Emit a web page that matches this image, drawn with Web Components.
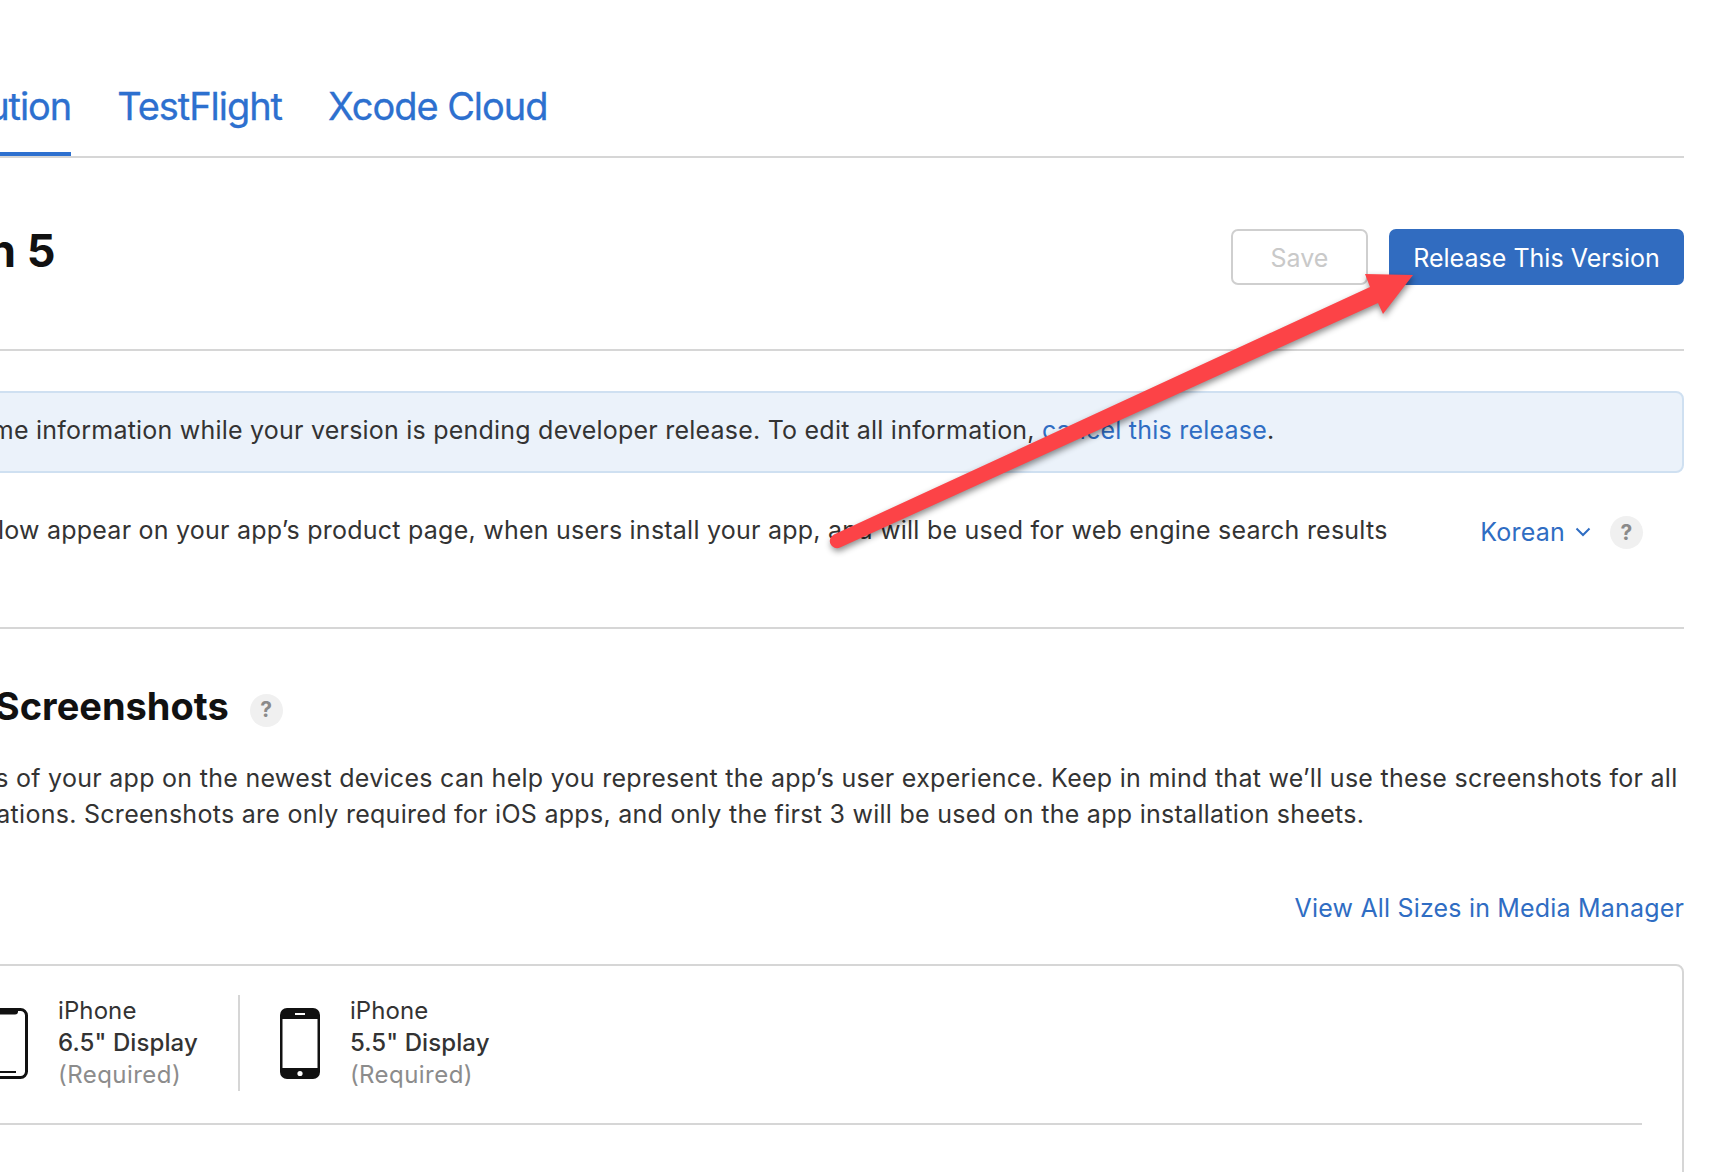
<!DOCTYPE html>
<html lang="en">
<head>
<meta charset="utf-8">
<title>App Store Connect</title>
<style>
  html, body { margin: 0; height: 100%; overflow: hidden; background: #fff; }
  body { font-family: Inter, "Liberation Sans", sans-serif; color: #333; }
</style>
</head>
<body>
<app-page>
  <app-tabs></app-tabs>
  <version-header></version-header>
  <info-banner></info-banner>
  <locale-row></locale-row>
  <media-section></media-section>
</app-page>
<release-arrow></release-arrow>

<script>
const BLUE = '#2f6dc3';

// Contenedor de la pagina: el contenido llega hasta x=1684 y se corta por la izquierda
class AppPage extends HTMLElement {
  constructor() {
    super();
    this.attachShadow({ mode: 'open' });
    this.shadowRoot.innerHTML = `
      <style>
        :host { display: block; width: 1684px; height: 1172px; overflow: hidden; }
      </style>
      <slot></slot>
    `;
  }
}

class AppTabs extends HTMLElement {
  constructor() {
    super();
    this.attachShadow({ mode: 'open' });
    this.shadowRoot.innerHTML = `
      <style>
        :host { display: flex; gap: 46px; height: 158px; box-sizing: border-box; border-bottom: 2px solid #d6d6d6; padding-top: 83px; }
        a { color: #2d70cf; font-size: 38px; line-height: 46px; letter-spacing: -1.05px; -webkit-text-stroke: .3px #2d70cf; white-space: nowrap; height: 73px; box-sizing: border-box; }
        a.on { margin-left: -122px; border-bottom: 4px solid #2d70cf; }
      </style>
      <a class="on">Distribution</a>
      <a>TestFlight</a>
      <a>Xcode Cloud</a>
    `;
  }
}

class VersionHeader extends HTMLElement {
  constructor() {
    super();
    this.attachShadow({ mode: 'open' });
    this.shadowRoot.innerHTML = `
      <style>
        :host { display: flex; justify-content: space-between; height: 193px; box-sizing: border-box; padding-top: 71px; border-bottom: 2px solid #d6d6d6; }
        h1 { margin: -6px 0 0 -153px; font-size: 45px; line-height: 56px; font-weight: 700; color: #111; white-space: nowrap; }
        .actions { display: flex; gap: 21px; height: 56px; }
        button { font: inherit; font-size: 25px; border-radius: 7px; margin: 0; padding: 2px 0 0; letter-spacing: .02px; }
        .save { width: 137px; background: #fff; color: #c9c9c9; border: 2px solid #cfcfcf; }
        .release { width: 295px; background: #316cc0; color: #fff; border: 0; }
      </style>
      <h1>Version 5</h1>
      <div class="actions">
        <button class="save">Save</button>
        <button class="release">Release This Version</button>
      </div>
    `;
  }
}

class InfoBanner extends HTMLElement {
  constructor() {
    super();
    this.attachShadow({ mode: 'open' });
    this.shadowRoot.innerHTML = `
      <style>
        :host { display: flex; align-items: center; margin: 40px 0 0 -20px; height: 82px; box-sizing: border-box; padding-bottom: 4px; background: #ebf2fa; border: 2px solid #cfe0f1; border-radius: 8px; font-size: 25px; letter-spacing: .22px; white-space: nowrap; overflow: hidden; }
        span { margin-left: -175px; }
        a { color: ${BLUE}; }
      </style>
      <span>You can edit some information while your version is pending developer release. To edit all information, <a>cancel this release</a>.</span>
    `;
  }
}

class HelpBadge extends HTMLElement {
  constructor() {
    super();
    this.attachShadow({ mode: 'open' });
    this.shadowRoot.innerHTML = `
      <style>
        :host { display: inline-flex; align-items: center; justify-content: center; width: 33px; height: 33px; border-radius: 50%; background: #f0f0f0; color: #8a8a8a; font-size: 21px; font-weight: 700; }
      </style>
      ?
    `;
  }
}

class LocaleRow extends HTMLElement {
  constructor() {
    super();
    this.attachShadow({ mode: 'open' });
    this.shadowRoot.innerHTML = `
      <style>
        :host { display: flex; justify-content: space-between; height: 156px; box-sizing: border-box; padding: 39px 41px 0 0; border-bottom: 2px solid #d6d6d6; font-size: 25px; letter-spacing: .235px; white-space: nowrap; }
        p { margin: 0 0 0 -159px; line-height: 36px; }
        .lang { display: flex; align-items: center; height: 40px; color: ${BLUE}; }
        svg { margin: 0 19px 0 10px; }
      </style>
      <p>The fields below appear on your app’s product page, when users install your app, and will be used for web engine search results</p>
      <div class="lang">Korean
        <svg width="16" height="10" viewBox="0 0 16 10"><path d="M1.5 1.5 8 8l6.5-6.5" fill="none" stroke="${BLUE}" stroke-width="2"/></svg>
        <help-badge></help-badge>
      </div>
    `;
  }
}

// Una pestana de dispositivo dentro de la tarjeta de capturas
class DeviceTab extends HTMLElement {
  constructor() {
    super();
    this.attachShadow({ mode: 'open' });
    this.shadowRoot.innerHTML = `
      <style>
        :host { display: flex; align-items: center; gap: 30px; height: 96px; font-size: 24px; letter-spacing: .1px; line-height: 32px; white-space: nowrap; }
        b { display: block; font-weight: 500; }
        i { display: block; font-style: normal; color: #8c8c8c; letter-spacing: .45px; }
      </style>
      <slot></slot>
      <div>iPhone<b>${this.getAttribute('size')}" Display</b><i>(Required)</i></div>
    `;
  }
}

class MediaSection extends HTMLElement {
  constructor() {
    super();
    this.attachShadow({ mode: 'open' });
    this.shadowRoot.innerHTML = `
      <style>
        :host { display: block; font-size: 25px; letter-spacing: .18px; }
        h2 { display: flex; align-items: center; gap: 21px; margin: 54px 0 0 -348px; font-size: 38px; line-height: 46px; font-weight: 700; color: #111; letter-spacing: 0; white-space: nowrap; }
        help-badge { margin-top: 8px; }
        p { margin: 31px 0 0; line-height: 36px; white-space: nowrap; letter-spacing: .28px; }
        p span { display: block; }
        .l1 { margin-left: -363px; }
        .l2 { margin-left: -290px; }
        .link { color: ${BLUE}; text-align: right; line-height: 36px; margin-top: 58px; }
        .card { margin: 38px 0 0 -20px; height: 300px; box-sizing: border-box; border: 2px solid #d6d6d6; border-radius: 8px; padding: 29px 40px 0 0; }
        .devices { display: flex; align-items: center; height: 130px; box-sizing: border-box; padding-bottom: 32px; border-bottom: 2px solid #d6d6d6; }
        .sep { width: 2px; height: 96px; background: #d6d6d6; margin: 0 40px; }
        .first { margin-left: 6px; }
      </style>
      <h2>App Previews and Screenshots <help-badge></help-badge></h2>
      <p>
        <span class="l1">App previews and screenshots of your app on the newest devices can help you represent the app’s user experience. Keep in mind that we’ll use these screenshots for all</span>
        <span class="l2">device sizes and localizations. Screenshots are only required for iOS apps, and only the first 3 will be used on the app installation sheets.</span>
      </p>
      <div class="link">View All Sizes in Media Manager</div>
      <div class="card">
        <div class="devices">
          <device-tab class="first" size="6.5">
            <svg width="40" height="71" viewBox="0 0 40 71"><rect x="1.500" y="1.500" width="37" height="68" rx="6" fill="#fff" stroke="#111" stroke-width="3"/><path d="M10 1.500h20v2a3 3 0 0 1-3 3H13a3 3 0 0 1-3-3z" fill="#111"/><rect x="12" y="63" width="16" height="2" fill="#111"/></svg>
          </device-tab>
          <div class="sep"></div>
          <device-tab size="5.5">
            <svg width="40" height="71" viewBox="0 0 40 71"><rect width="40" height="71" rx="7" fill="#111"/><rect x="2.500" y="11" width="35" height="49" fill="#fff"/><rect x="15" y="5" width="10" height="2" fill="#fff"/><circle cx="20" cy="65.500" r="2.600" fill="#fff"/></svg>
          </device-tab>
        </div>
      </div>
    `;
  }
}

// Flecha roja de anotacion, va encima del contenido
class ReleaseArrow extends HTMLElement {
  constructor() {
    super();
    this.attachShadow({ mode: 'open' });
    this.shadowRoot.innerHTML = `
      <style>
        :host { position: absolute; left: 0; top: 0; width: 1712px; height: 1172px; pointer-events: none; }
        svg { filter: drop-shadow(1px 3px 3px rgba(0,0,0,.45)); }
      </style>
      <svg width="1712" height="1172" viewBox="0 0 1712 1172">
        <path d="M834 534.500 1370 287 1365 274 1413 275 1383 314 1378 303 840 547.500A7 7 0 0 1 834 534.500Z" fill="#fc4347"/>
      </svg>
    `;
  }
}

customElements.define('app-page', AppPage);
customElements.define('app-tabs', AppTabs);
customElements.define('version-header', VersionHeader);
customElements.define('info-banner', InfoBanner);
customElements.define('help-badge', HelpBadge);
customElements.define('locale-row', LocaleRow);
customElements.define('device-tab', DeviceTab);
customElements.define('media-section', MediaSection);
customElements.define('release-arrow', ReleaseArrow);
</script>
</body>
</html>
